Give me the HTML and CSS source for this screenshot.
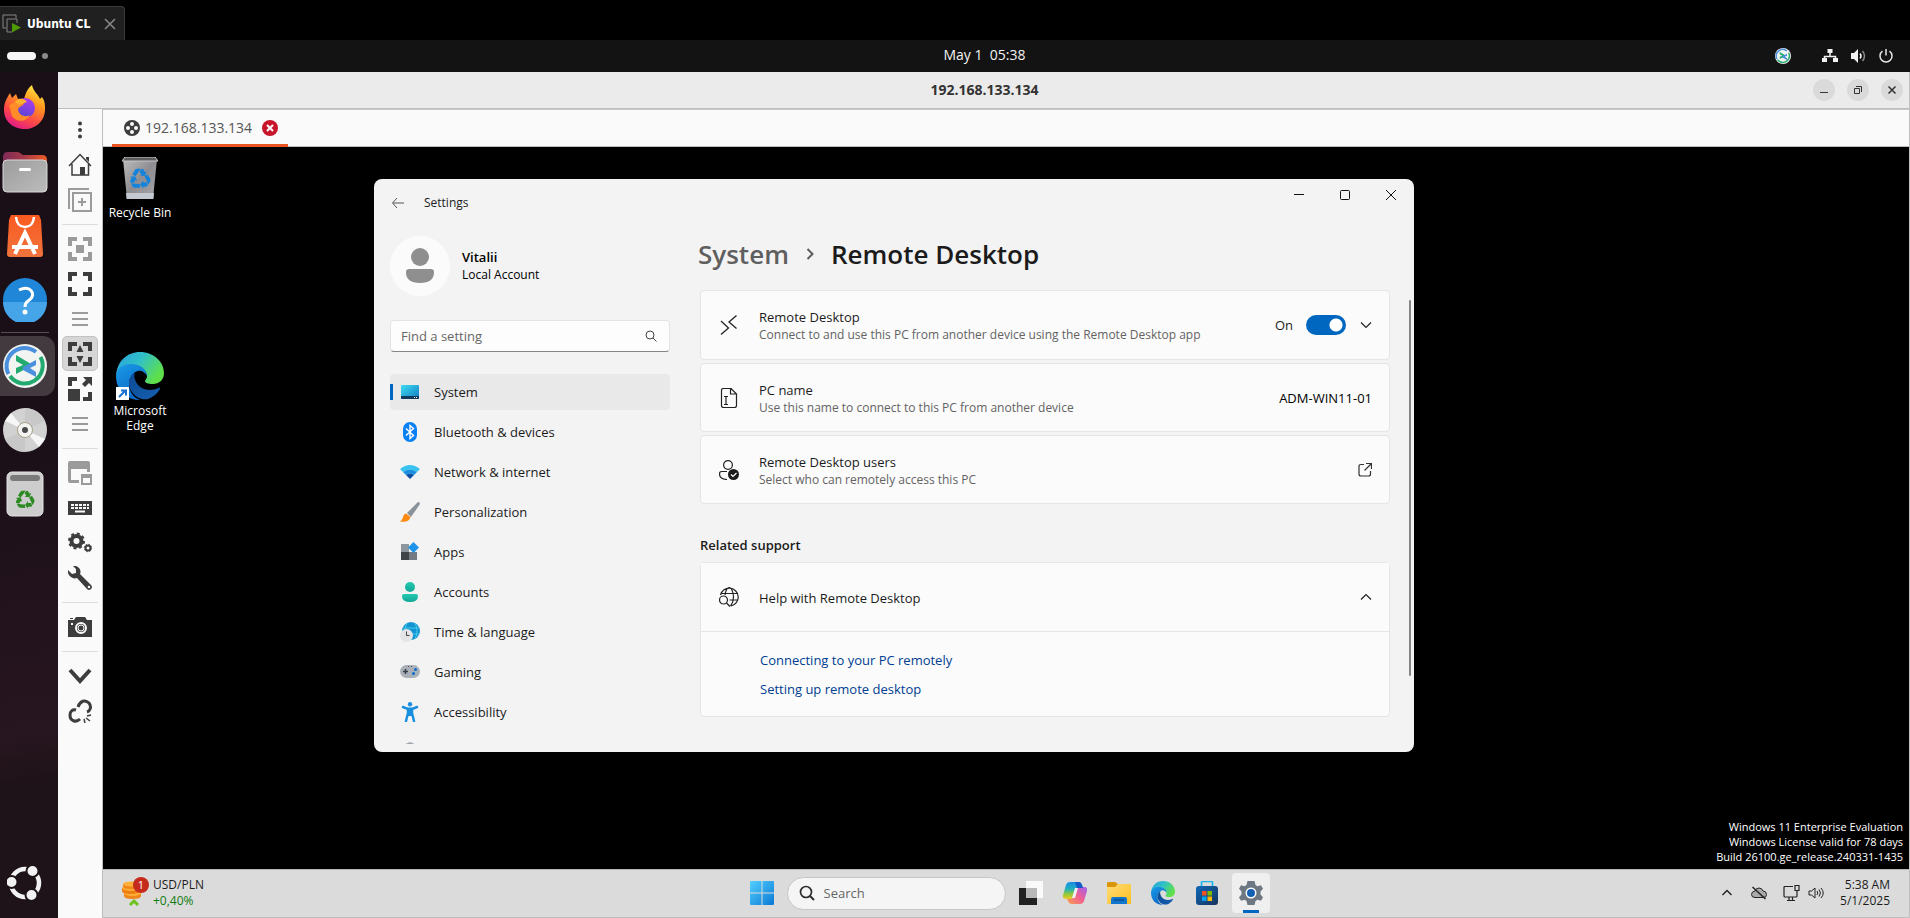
FILE: index.html
```html
<!DOCTYPE html>
<html lang="en">
<head>
<meta charset="utf-8">
<title>Ubuntu CL</title>
<link rel="stylesheet" href="styles.css">
</head>
<body>
<svg class="defs" width="0" height="0" aria-hidden="true">
  <defs>
    <linearGradient id="edgeTop" x1="0" y1="0" x2="1" y2="0.5"><stop offset="0" stop-color="#2a9fe0"/><stop offset="0.5" stop-color="#30c0c8"/><stop offset="1" stop-color="#5fe04a"/></linearGradient>
    <linearGradient id="edgeMid" x1="0" y1="0" x2="0.5" y2="1"><stop offset="0" stop-color="#1a9be8"/><stop offset="1" stop-color="#0a68c4"/></linearGradient>
    <linearGradient id="edgeLow" x1="0" y1="0" x2="1" y2="1"><stop offset="0" stop-color="#0c4a94"/><stop offset="1" stop-color="#155fb0"/></linearGradient>
    <linearGradient id="ffBody" x1="0.8" y1="0" x2="0.3" y2="1"><stop offset="0" stop-color="#fff04a"/><stop offset="0.35" stop-color="#ff9a1f"/><stop offset="0.7" stop-color="#ff4a45"/><stop offset="1" stop-color="#e01a8a"/></linearGradient>
    <linearGradient id="ffGlobe" x1="0.7" y1="0" x2="0.3" y2="1"><stop offset="0" stop-color="#b03af0"/><stop offset="1" stop-color="#5048d0"/></linearGradient>
    <linearGradient id="grey" x1="0" y1="0" x2="1" y2="1"><stop offset="0" stop-color="#9c9c9c"/><stop offset="1" stop-color="#bcbcbc"/></linearGradient>
    <linearGradient id="folderBack" x1="0" y1="0" x2="1" y2="0"><stop offset="0" stop-color="#7e2a58"/><stop offset="0.5" stop-color="#a83a48"/><stop offset="1" stop-color="#f05a24"/></linearGradient>
    <linearGradient id="bag" x1="0" y1="0" x2="0" y2="1"><stop offset="0" stop-color="#fa5a20"/><stop offset="1" stop-color="#f0743c"/></linearGradient>
    <linearGradient id="win" x1="0" y1="0" x2="1" y2="1"><stop offset="0" stop-color="#52d0ff"/><stop offset="1" stop-color="#0a78d4"/></linearGradient>
    <linearGradient id="screen" x1="0" y1="0" x2="1" y2="1"><stop offset="0" stop-color="#3fdcf0"/><stop offset="1" stop-color="#0f7cc4"/></linearGradient>
    <linearGradient id="teal" x1="0" y1="0" x2="0" y2="1"><stop offset="0" stop-color="#26c9b0"/><stop offset="1" stop-color="#12a796"/></linearGradient>
    <linearGradient id="folder" x1="0" y1="0" x2="1" y2="1"><stop offset="0" stop-color="#ffdc78"/><stop offset="1" stop-color="#fdbf20"/></linearGradient>
    <linearGradient id="store" x1="0" y1="0" x2="1" y2="1"><stop offset="0" stop-color="#0f68b8"/><stop offset="1" stop-color="#17335c"/></linearGradient>
    <linearGradient id="copA" x1="0" y1="0" x2="0" y2="1"><stop offset="0" stop-color="#1a8ce8"/><stop offset="0.4" stop-color="#20b0c0"/><stop offset="0.7" stop-color="#8cc83c"/><stop offset="1" stop-color="#f0c820"/></linearGradient>
    <linearGradient id="copB" x1="1" y1="0" x2="0" y2="1"><stop offset="0" stop-color="#a060f0"/><stop offset="0.5" stop-color="#f06090"/><stop offset="1" stop-color="#f8a050"/></linearGradient>
    <linearGradient id="bin" x1="0" y1="0" x2="1" y2="1"><stop offset="0" stop-color="#bdbdbf"/><stop offset="0.5" stop-color="#8e8e92"/><stop offset="1" stop-color="#a8a8ac"/></linearGradient>
    <symbol id="recycle" viewBox="0 0 24 24">
      <g id="arrow"><path d="M7 10.2 3.6 8.2 6.4 3.4Q7.2 2 8.8 2H13L8.2 8.5Z"/><path d="M14 2q1.3 0 2 1.1L17.500 5.700 19.500 4.600 17.300 9.800 11.600 9.300 13.500 8.100 11.500 4.800Z"/></g>
      <use href="#arrow" transform="rotate(120 12 13)"/><use href="#arrow" transform="rotate(240 12 13)"/>
    </symbol>
    <symbol id="edge" viewBox="0 0 48 48">
      <path d="M0 24C1 9 11 0 24 0c14 0 24 10 24 21 0 7-5 11-11 11-5 0-8-1-8-3 0-1 2-2 2-5 0-4-4-9-11-9C10 15 2 19 0 24Z" fill="url(#edgeTop)"/>
      <path d="M0 24C1 16 7 12 15 12c9 0 16 5 16 12-2-4-6-6-9-5-5 1-9 7-9 13 0 8 5 14 11 16C10 48 0 38 0 24Z" fill="url(#edgeMid)"/>
      <path d="M19 20c-7 5-8 14-3 20 4 6 10 8 16 7 5-2 9-5 12-10 0-1 0-2-1-1-9 4-19 2-23-6-2-4-2-7-1-10Z" fill="url(#edgeLow)"/>
    </symbol>
    <symbol id="remmina" viewBox="0 0 44 44">
      <circle cx="22" cy="22" r="22" fill="#f2f4f2"/>
      <path d="M5.500 30A18 18 0 0 1 33 8" fill="none" stroke="#4a90dd" stroke-width="4"/>
      <path d="M37.500 13A18 18 0 0 1 7 32" fill="none" stroke="#22aa70" stroke-width="4"/>
      <path d="M13 11v6l7 4-7 3v6l15-8v-2Z" fill="#22aa70"/><path d="M33 16v5l-6 3 6 4v5l-13-7v-3Z" fill="#4a90dd"/>
    </symbol>
    <symbol id="lines" viewBox="0 0 24 24"><path d="M4 6h16M4 12h16M4 18h16" stroke="#9b9b9b" stroke-width="2"/></symbol>
    <symbol id="corners" viewBox="0 0 24 24"><path d="M2 9V2h7M15 2h7v7M22 15v7h-7M9 22H2v-7" fill="none" stroke="currentColor" stroke-width="4"/></symbol>
  </defs>
</svg>

<header class="host-tabs">
  <div class="host-tab">
    <svg width="20" height="20" viewBox="0 0 20 20"><path d="M4 14H1V1h13v3M15 9V5H5v13h5" fill="none" stroke="#858585"/><path d="m10 9 9 4.500-9 5Z" fill="#4e9a06"/></svg>
    <span class="host-name">Ubuntu CL</span>
    <button class="plain" aria-label="Close tab"><svg width="12" height="12" viewBox="0 0 12 12"><path d="m1 1 10 10M11 1 1 11" stroke="#8a8a8a" stroke-width="1.500"/></svg></button>
  </div>
</header>

<div class="panel">
  <div class="workspaces"><span class="pill"></span><span class="dot"></span></div>
  <time class="clock">May 1&nbsp; 05:38</time>
  <div class="indicators">
    <svg class="ind-remmina" width="16" height="16"><use href="#remmina"/></svg>
    <svg width="16" height="16" viewBox="0 0 16 16"><path d="M8 4v5M2.500 12V8.500h11V12" fill="none" stroke="#f2f2f2" stroke-width="1.500"/><path d="M5.500 1h5v4h-5zM0 10h5v4H0zM11 10h5v4h-5z" fill="#f2f2f2"/></svg>
    <svg width="16" height="16" viewBox="0 0 16 16"><path d="M1 5h3l4-4v14l-4-4H1Z" fill="#f2f2f2"/><path d="M10 5.500q2 2.500 0 5" fill="none" stroke="#f2f2f2" stroke-width="1.500"/><path d="M12.500 3q4 5 0 10" fill="none" stroke="#888" stroke-width="1.500"/></svg>
    <svg width="16" height="16" viewBox="0 0 16 16"><path d="M4.500 3.200a6 6 0 1 0 7 0M8 1v6.500" fill="none" stroke="#e6e6e6" stroke-width="1.500"/></svg>
  </div>
</div>

<div class="session">
  <nav class="dock" aria-label="Dock">
    <button class="dock-item" aria-label="Firefox"><svg width="44" height="46" viewBox="0 0 44 46"><path d="M1 25C1 17 4 13 7 8l2 5 4-4 2 5h6c2-7 4-11 8-14 1 6 6 9 8 14l2-2c3 4 3 8 3 12 0 12-9 20-20 20S1 37 1 25Z" fill="url(#ffBody)"/><circle cx="22" cy="23" r="10" fill="url(#ffGlobe)"/><path d="M6 21c3-4 9-5 15-3-1 4-6 3-6 7 1 5 7 8 12 5-3 7-14 8-18 1-1-3-1-6-3-10Z" fill="#ff8c28"/><path d="M15 14c6-1 7 1 9 3l-8 3-4-3Z" fill="#ffb02e"/></svg></button>
    <button class="dock-item" aria-label="Files"><svg width="46" height="42" viewBox="0 0 46 42"><path d="M1 6q0-5 5-5h9q2 0 3 1l3 2h19q5 0 5 5v11H1Z" fill="url(#folderBack)"/><rect x="1" y="9" width="44" height="32" rx="4" fill="url(#grey)" stroke="#d8d8d8"/><rect x="17" y="17" width="12" height="3" rx="1.500" fill="#fff"/></svg></button>
    <button class="dock-item" aria-label="App Center"><svg width="36" height="44" viewBox="0 0 36 44"><path d="M4 1h28l2 5 2 34q0 3-3 3H3q-3 0-3-3L2 6Z" fill="url(#bag)"/><path d="M9 3q1 10 9 10t9-10" fill="none" stroke="#fff" stroke-width="2.500"/><path d="m8 40 10-21 10 21M5 33h26" fill="none" stroke="#fff" stroke-width="4"/></svg></button>
    <button class="dock-item" aria-label="Help"><svg width="44" height="44" viewBox="0 0 44 44"><circle cx="22" cy="22" r="22" fill="#1f86d8"/><path d="M0 24h44a22 22 0 0 1-44 0Z" fill="#46a4e8"/><path d="M16 12q6-3 10-1 5 3 3 8-1 2-4 4-3 2-3 6" fill="none" stroke="#fff" stroke-width="3"/><circle cx="22" cy="34" r="2.500" fill="#fff"/></svg></button>
    <hr class="dock-line">
    <button class="dock-item running" aria-label="Remmina"><svg width="44" height="44"><use href="#remmina"/></svg></button>
    <button class="dock-item" aria-label="Disc"><svg width="44" height="44" viewBox="0 0 44 44"><circle cx="22" cy="22" r="22" fill="#d2d2d2"/><path d="M22 22 2 13 8 5ZM22 22l20 9-6 8Z" fill="#f6f6f6"/><path d="M22 22 22 0A22 22 0 0 1 42 13ZM22 22v22A22 22 0 0 1 2 31Z" fill="#c8c8c8"/><circle cx="22" cy="22" r="7.500" fill="#f4f4f2" stroke="#a89f88"/><circle cx="22" cy="22" r="3" fill="#4a4a4a"/></svg></button>
    <button class="dock-item" aria-label="Trash"><svg width="38" height="46" viewBox="0 0 38 46"><rect x="1" y="1" width="36" height="44" rx="5" fill="#cdcdcd" stroke="#e4e4e4"/><rect x="4" y="4" width="30" height="6" rx="3" fill="#7a7a7a"/><g fill="#2b8a22"><use href="#recycle" x="9" y="18" width="20" height="20"/></g></svg></button>
    <button class="dock-item dock-end" aria-label="Show apps"><svg width="36" height="36" viewBox="0 0 36 36"><circle cx="18" cy="18" r="14" fill="none" stroke="#f2f2f2" stroke-width="4.500"/><g fill="#f2f2f2" stroke="#1d1218" stroke-width="2"><circle cx="25.500" cy="6" r="6"/><circle cx="4.500" cy="17" r="6"/><circle cx="24.500" cy="30" r="6"/></g></svg></button>
  </nav>

  <main class="remote">
    <div class="titlebar">
      <h1 class="title">192.168.133.134</h1>
      <div class="win-controls">
        <button aria-label="Minimize"><svg width="10" height="10" viewBox="0 0 10 10"><path d="M1 7.500h8" stroke="#333"/></svg></button>
        <button aria-label="Restore"><svg width="10" height="10" viewBox="0 0 10 10"><path d="M1.500 3.500h5v5h-5zM3 1.500h5.500V7" fill="none" stroke="#333"/></svg></button>
        <button aria-label="Close"><svg width="10" height="10" viewBox="0 0 10 10"><path d="m1.500 1.500 7 7M8.500 1.500l-7 7" stroke="#333" stroke-width="1.500"/></svg></button>
      </div>
    </div>
    <div class="remote-body">
      <div class="toolbar" role="toolbar" aria-label="Connection tools">
        <button aria-label="Menu"><svg width="24" height="24" viewBox="0 0 24 24"><g fill="#3d3d3d"><circle cx="12" cy="5.500" r="2"/><circle cx="12" cy="12" r="2"/><circle cx="12" cy="18.500" r="2"/></g></svg></button>
        <button aria-label="Home"><svg width="24" height="24" viewBox="0 0 24 24"><path d="M1 13 12 1.500 23 13M4 11v11h16.500V11" fill="none" stroke="#3d3d3d" stroke-width="1.500"/><path d="M12 14h5v8h-5zM18 4h3v5l-3-3z" fill="#3d3d3d"/></svg></button>
        <button aria-label="Duplicate"><svg width="24" height="24" viewBox="0 0 24 24"><path d="M1 21V1h20M5 5h18v18H5zM14 10v8M10 14h8" fill="none" stroke="#9b9b9b" stroke-width="2"/></svg></button>
        <hr>
        <button class="off" aria-label="Fit window"><svg width="24" height="24" viewBox="0 0 24 24"><use href="#corners"/><path d="M8 8h8v8H8z" fill="currentColor"/></svg></button>
        <button aria-label="Fullscreen"><svg width="24" height="24"><use href="#corners"/></svg></button>
        <button aria-label="Fullscreen options"><svg width="24" height="24"><use href="#lines"/></svg></button>
        <button class="active" aria-label="Dynamic resolution"><svg width="24" height="24" viewBox="0 0 24 24"><use href="#corners"/><path d="m12 3 3.500 7h-7ZM12 21l3.500-7h-7Z" fill="currentColor"/></svg></button>
        <button aria-label="Scaled mode"><svg width="24" height="24" viewBox="0 0 24 24"><path d="M2 9V2h7M22 15v7h-7" fill="none" stroke="currentColor" stroke-width="4"/><path d="M0 12h12v12H0zM15 0h9v9l-3-3-4 4-3-3 4-4Z" fill="currentColor"/></svg></button>
        <button aria-label="Scale options"><svg width="24" height="24"><use href="#lines"/></svg></button>
        <hr>
        <button class="off" aria-label="Multi monitor"><svg width="24" height="24" viewBox="0 0 24 24"><path d="M0 2q0-2 2-2h18q2 0 2 2v9h-3V8H3v11h8v3H2q-2 0-2-2Z" fill="currentColor"/><path d="M13 13h11v11H13Zm2 4v5h7v-5Z" fill="currentColor" fill-rule="evenodd"/></svg></button>
        <button aria-label="Keyboard"><svg width="24" height="24" viewBox="0 0 24 24"><path d="M0 5h24v14H0Z" fill="currentColor"/><path d="M3 9h18M3 12h18" stroke="#fafafa" stroke-width="2" stroke-dasharray="3 1"/><path d="M7 15.500h10" stroke="#fafafa" stroke-width="2"/></svg></button>
        <button aria-label="Preferences"><svg width="24" height="24" viewBox="0 0 24 24" fill="none" stroke="currentColor"><circle cx="8.500" cy="10" r="5" stroke-width="4"/><circle cx="8.500" cy="10" r="7.500" stroke-width="2" stroke-dasharray="3 2.900"/><circle cx="20" cy="17" r="2.500" stroke-width="2"/><circle cx="20" cy="17" r="3.700" stroke-dasharray="1.500 1.400"/></svg></button>
        <button aria-label="Tools"><svg width="24" height="24" viewBox="0 0 24 24"><path d="M5 0c5-1 9 4 7 8l11 11q2 2 0 4t-4 0L9 12C4 14-1 9 0 4l4 4 4-1V3Z" fill="currentColor"/><circle cx="21" cy="21" r="1.300" fill="#fafafa"/></svg></button>
        <hr>
        <button aria-label="Screenshot"><svg width="24" height="24" viewBox="0 0 24 24"><path d="M0 5h6l2-3h9l2 3h5v17H0ZM2 3h3v1H2z" fill="currentColor"/><circle cx="13" cy="13" r="5" fill="none" stroke="#fafafa" stroke-width="2"/><circle cx="13" cy="13" r="3" fill="none" stroke="#fafafa"/><path d="M3 8h2v2H3z" fill="#fafafa"/></svg></button>
        <hr>
        <button aria-label="Minimize window"><svg width="24" height="24" viewBox="0 0 24 24"><path d="m2 6 10 11L22 6" fill="none" stroke="currentColor" stroke-width="4"/></svg></button>
        <button aria-label="Disconnect"><svg width="24" height="24" viewBox="0 0 24 24" fill="none" stroke="currentColor" stroke-width="3"><path d="M10 8c2-6 7-8 11-4 3 4 1 8-2 9M12 20c-4 4-10 2-10-4 0-4 3-6 6-5"/><path d="m19 17 4-1M18 19l4 3M16 20l1 4" stroke-width="1.500"/></svg></button>
      </div>

      <div class="viewer">
        <div class="tabs">
          <div class="tab">
            <svg width="16" height="16" viewBox="0 0 16 16"><circle cx="8" cy="8" r="8" fill="#3d3d3d"/><g fill="#fafafa"><circle cx="8" cy="4" r="2"/><circle cx="4" cy="8" r="2"/><circle cx="12" cy="8" r="2"/><circle cx="8" cy="12" r="2"/></g></svg>
            <span>192.168.133.134</span>
            <button class="plain" aria-label="Close connection"><svg width="16" height="16" viewBox="0 0 16 16"><circle cx="8" cy="8" r="8" fill="#c7162b"/><path d="m5 5 6 6M11 5l-6 6" stroke="#fff" stroke-width="2"/></svg></button>
          </div>
        </div>

        <div class="desktop">
          <button class="shortcut bin"><svg width="36" height="42" viewBox="0 0 36 42"><path d="M1 2h34l-4 40H5Z" fill="url(#bin)"/><path d="M0 4 3 0h30l3 4Z" fill="#5c5e60" stroke="#c8c8c8"/><path d="m4 36 .6 6h26.800l.6-6Z" fill="#c4c8d0"/><g fill="#1483dc"><use href="#recycle" x="7" y="10" width="22" height="22"/></g></svg><span>Recycle Bin</span></button>
          <button class="shortcut edge"><svg width="48" height="48" viewBox="0 0 48 48"><use href="#edge"/><path d="M0 35h13v13H0Z" fill="#fff"/><path d="m3 45 6-6M5 38.500h5v5" fill="none" stroke="#1a6fd0" stroke-width="2"/></svg><span>Microsoft Edge</span></button>

          <section class="settings" aria-label="Settings">
            <aside class="side">
              <div class="caption"><button class="plain" aria-label="Back"><svg width="14" height="12" viewBox="0 0 14 12"><path d="M6 1 1.500 6 6 11M2 6h11" fill="none" stroke="#555"/></svg></button><span>Settings</span></div>
              <div class="user">
                <svg width="60" height="60" viewBox="0 0 60 60"><circle cx="30" cy="30" r="30" fill="#fbfbfb"/><g fill="#8f8f8f"><circle cx="30" cy="21" r="9"/><path d="M19 33h22q3 0 3 3 0 11-14 11T16 36q0-3 3-3Z"/></g></svg>
                <div><strong>Vitalii</strong><small>Local Account</small></div>
              </div>
              <label class="find"><input type="text" placeholder="Find a setting" aria-label="Find a setting"><svg width="12" height="12" viewBox="0 0 12 12"><circle cx="5" cy="5" r="4" fill="none" stroke="#444"/><path d="m8 8 3.500 3.500" stroke="#444"/></svg></label>
              <nav class="menu" aria-label="Settings sections">
                <a href="#" class="on"><svg viewBox="0 0 20 20"><rect x="1" y="3" width="18" height="14" rx="1" fill="url(#screen)"/><path d="M1 14h18v2q0 1-1 1H2q-1 0-1-1Z" fill="#123a5c"/><path d="M14 15.500h1M16 15.500h1" stroke="#fff"/></svg>System</a>
                <a href="#"><svg viewBox="0 0 20 20"><rect x="3" width="14" height="20" rx="7" fill="#0a80f5"/><path d="m6 6.500 7.500 7-3.500 3v-13l3.500 3-7.500 7" fill="none" stroke="#fff" stroke-width="1.400"/></svg>Bluetooth &amp; devices</a>
                <a href="#"><svg viewBox="0 0 20 20"><path d="M0 7Q10-1 20 7l-3 3Q10 5 3 10Z" fill="#38c4ee"/><path d="M3 10q7-5 14 0l-3 3q-4-3-8 0Z" fill="#1b90e0"/><path d="M6 13q4-3 8 0l-4 4Z" fill="#0d4fa4"/></svg>Network &amp; internet</a>
                <a href="#"><svg viewBox="0 0 20 20"><path d="M18 0q2 0 2 2L11 15l-4-4Z" fill="#8a929a"/><path d="M6 11.500 10.500 15C9 20 5 20 0 19.500c4-2 2-7 6-8Z" fill="#fb8a14"/></svg>Personalization</a>
                <a href="#"><svg viewBox="0 0 20 20"><path d="M1 2h8v8H1z" fill="#8d969e"/><path d="M1 10h8v8H1z" fill="#3e4448"/><path d="M9 10h8v8H9z" fill="#747b82"/><path d="m13.500 0 5.500 5.500-5.500 5.500L8 5.500Z" fill="#1d94ea"/></svg>Apps</a>
                <a href="#"><svg viewBox="0 0 20 20" fill="url(#teal)"><circle cx="10" cy="5" r="5"/><path d="M4 12h12q2 0 2 2 0 6-8 6t-8-6q0-2 2-2Z"/></svg>Accounts</a>
                <a href="#"><svg viewBox="0 0 20 20"><circle cx="11" cy="9" r="9" fill="#1494d2"/><path d="M3 6h16M4 12h15M7 1q-4 8 0 16M15 1q4 8 0 16" fill="none" stroke="#45cbe8"/><circle cx="6.500" cy="13.500" r="6.500" fill="#e2e4e6"/><path d="M6.500 9.500v4h3" fill="none" stroke="#444"/></svg>Time &amp; language</a>
                <a href="#"><svg viewBox="0 0 20 20"><rect y="3" width="20" height="13" rx="6.500" fill="#a9b0b8"/><path d="M3 9.500h5M5.500 7v5" stroke="#3a3e44" stroke-width="1.500"/><path d="M8 4.500h1M11 4.500h1" stroke="#555"/><circle cx="15.500" cy="7.500" r="1.500" fill="#0a6cd0"/><circle cx="13.500" cy="11.500" r="1.500" fill="#0a6cd0"/></svg>Gaming</a>
                <a href="#"><svg viewBox="0 0 20 20"><circle cx="10" cy="2.200" r="2.200" fill="#1a8fe0"/><path d="m3 5 5 2v4l-2 8M17 5l-5 2v4l2 8" fill="none" stroke="#1a8fe0" stroke-width="2.500" stroke-linecap="round"/><path d="M7 5.500h6V14H7z" fill="#1a8fe0"/></svg>Accessibility</a>
                <a href="#" aria-label="Privacy &amp; security"><svg viewBox="0 0 20 20"><path d="m10 0 7 3v8q0 5-7 9-7-4-7-9V3Z" fill="#a0a6ae"/></svg></a>
              </nav>
            </aside>

            <div class="page">
              <div class="caption-buttons">
                <button aria-label="Minimize"><svg width="12" height="12" viewBox="0 0 12 12"><path d="M1 5.500h10" stroke="#111"/></svg></button>
                <button aria-label="Maximize"><svg width="12" height="12" viewBox="0 0 12 12"><rect x="1.500" y="1.500" width="9" height="9" rx="1" fill="none" stroke="#111"/></svg></button>
                <button aria-label="Close"><svg width="12" height="12" viewBox="0 0 12 12"><path d="m1 1 10 10M11 1 1 11" stroke="#111"/></svg></button>
              </div>
              <h2 class="crumbs"><span class="parent">System</span><svg width="8" height="12" viewBox="0 0 8 12"><path d="m1.500 1 5 5-5 5" fill="none" stroke="#5c5c5c" stroke-width="2"/></svg><span>Remote Desktop</span></h2>

              <div class="cards">
                <div class="card lead">
                  <svg width="20" height="20" viewBox="0 0 20 20"><path d="m2 6 7.500 7L2 19.500M17.500.500 10 7l7.500 6.500" fill="none" stroke="#222" stroke-width="1.300"/></svg>
                  <div class="what"><b>Remote Desktop</b><small>Connect to and use this PC from another device using the Remote Desktop app</small></div>
                  <label class="toggle">On<input type="checkbox" role="switch" checked></label>
                  <button class="plain" aria-label="Expand"><svg width="12" height="12" viewBox="0 0 12 12"><path d="m1 3.500 5 5 5-5" fill="none" stroke="#222" stroke-width="1.200"/></svg></button>
                </div>
                <div class="card">
                  <svg width="20" height="20" viewBox="0 0 20 20"><path d="M4.500.500H12L17.500 6v11.500q0 2-2 2h-11q-2 0-2-2v-15q0-2 2-2ZM11.500.500V6h6M5 8.500h4M5 16.500h4M7 8.500v8" fill="none" stroke="#222" stroke-width="1.200"/></svg>
                  <div class="what"><b>PC name</b><small>Use this name to connect to this PC from another device</small></div>
                  <span class="value">ADM-WIN11-01</span>
                </div>
                <div class="card">
                  <svg width="20" height="20" viewBox="0 0 20 20"><circle cx="9" cy="5" r="4.400" fill="none" stroke="#222" stroke-width="1.200"/><path d="M8 11.500H2.500q-2 0-2 2.500 0 5 7.500 5.500" fill="none" stroke="#222" stroke-width="1.200"/><circle cx="14.500" cy="14.500" r="5.500" fill="#1b1b1b"/><path d="m12 14.500 2 2 3.500-3.500" fill="none" stroke="#fff" stroke-width="1.200"/></svg>
                  <div class="what"><b>Remote Desktop users</b><small>Select who can remotely access this PC</small></div>
                  <button class="plain" aria-label="Open"><svg width="14" height="14" viewBox="0 0 14 14"><path d="M6 1.500H3q-2 0-2 2V11q0 2 2 2h7.500q2 0 2-2V8M8 .500h5.500V6M13 1 6.500 7.500" fill="none" stroke="#333" stroke-width="1.200"/></svg></button>
                </div>
              </div>

              <h3 class="related">Related support</h3>
              <div class="help">
                <div class="card">
                  <svg width="20" height="20" viewBox="0 0 20 20" fill="none" stroke="#222" stroke-width="1.200"><path d="M1.500 8A9 9 0 1 1 12 19M1.500 6.500h17.500M10.500 13H19M6 8q1-7 4.500-7.500Q14 2 14.500 10q0 5-3 9"/><circle cx="4.500" cy="13" r="4"/><path d="m7.500 16 3.500 3.500"/></svg>
                  <div class="what"><b>Help with Remote Desktop</b></div>
                  <button class="plain" aria-label="Collapse"><svg width="12" height="12" viewBox="0 0 12 12"><path d="m1 8.500 5-5 5 5" fill="none" stroke="#222" stroke-width="1.200"/></svg></button>
                </div>
                <div class="links"><a href="#">Connecting to your PC remotely</a><a href="#">Setting up remote desktop</a></div>
              </div>
              <span class="scrollbar"></span>
            </div>
          </section>

          <p class="watermark">Windows 11 Enterprise Evaluation<br>Windows License valid for 78 days<br>Build 26100.ge_release.240331-1435</p>
        </div>

        <footer class="taskbar">
          <button class="widget">
            <svg width="28" height="32" viewBox="0 0 28 32"><path d="M2 16v3q0 3 8.500 3t8.500-3v-3Z" fill="#f0861a"/><ellipse cx="10.500" cy="16" rx="8.500" ry="3" fill="#ffb038"/><path d="M0 11v3q0 3 8.500 3t8.500-3v-3Z" fill="#ee7e14"/><ellipse cx="8.500" cy="11" rx="8.500" ry="3" fill="#ffaa30"/><path d="M1 7v2q0 3 8.500 3t8.500-3V7Z" fill="#f0861a"/><ellipse cx="9.500" cy="7" rx="8.500" ry="2.500" fill="#ffb038"/><path d="m8 28 4-4 4 4" fill="none" stroke="#6cc21c" stroke-width="3"/><circle cx="19" cy="8" r="8" fill="#c42b1c"/><text x="19" y="12" text-anchor="middle" class="badge">1</text></svg>
            <span>USD/PLN<em>+0,40%</em></span>
          </button>
          <div class="apps">
            <button aria-label="Start"><svg width="24" height="24" viewBox="0 0 24 24" fill="url(#win)"><path d="M0 1q0-1 1-1h10.500v11.500H0ZM12.500 0H23q1 0 1 1v10.500H12.500ZM0 12.500h11.500V24H1q-1 0-1-1ZM12.500 12.500H24V23q0 1-1 1H12.500Z"/></svg></button>
            <label class="search"><svg width="16" height="16" viewBox="0 0 16 16"><circle cx="7" cy="7" r="5.500" fill="none" stroke="#2b2b2b" stroke-width="1.700"/><path d="m11 11 4 4" stroke="#2b2b2b" stroke-width="2"/></svg><input type="text" placeholder="Search" aria-label="Search"></label>
            <button aria-label="Task view"><svg width="24" height="24" viewBox="0 0 24 24"><path d="M0 7h18v17H0Z" fill="#222"/><path d="M7 0h17v17H7Z" fill="#fafafa"/><path d="M7 7h11v10H7Z" fill="#b8b8b8"/></svg></button>
            <button aria-label="Copilot"><svg width="24" height="24" viewBox="0 0 24 24"><path d="M7 1h9q2 0 3 3l1 3h-4q-2 0-3 3l-2 6q-1 2-3 2H3q-4 0-3-4l3-10q1-3 4-3Z" fill="url(#copA)"/><path d="M17 23H8q-2 0-3-3l-1-2h4q2 0 3-3l2-6q1-3 3-3h5q4 0 3 4l-3 10q-1 3-4 3Z" fill="url(#copB)"/><path d="M12 7h3l-3 10H9Z" fill="#f4eef4"/><path d="M12 1h4q2 0 3 3l1 3h-6Z" fill="#1558c8"/></svg></button>
            <button aria-label="File Explorer"><svg width="24" height="24" viewBox="0 0 24 24"><path d="M0 2q0-1 1-1h7l3 2v4H0Z" fill="#d9950c"/><path d="M0 6h8l3-3h12q1 0 1 1v18q0 1-1 1H1q-1 0-1-1Z" fill="url(#folder)"/><path d="M4 23v-5q0-2 2-2h12q2 0 2 2v5Z" fill="#1276cc"/><path d="M7 19h10" stroke="#0a58a0" stroke-width="2"/></svg></button>
            <button aria-label="Edge"><svg width="24" height="24"><use href="#edge"/></svg></button>
            <button aria-label="Microsoft Store"><svg width="24" height="24" viewBox="0 0 24 24"><path d="M6.500 6V1.500q0-1 1-1h9q1 0 1 1V6" fill="none" stroke="#1cb4ea" stroke-width="1.700"/><rect x="1" y="5" width="22" height="19" rx="3" fill="url(#store)"/><path d="M7 10h4.500v4.500H7z" fill="#f25022"/><path d="M12.500 10H17v4.500h-4.500z" fill="#7fba00"/><path d="M7 15.500h4.500V20H7z" fill="#00a4ef"/><path d="M12.500 15.500H17V20h-4.500z" fill="#ffb900"/></svg></button>
            <button class="current" aria-label="Settings"><svg width="24" height="24" viewBox="0 0 24 24"><path d="M8.500 0h7l1 4 2 1.200 3.500-1 2 3.600-2.500 2.700v3L24 16.200l-2 3.600-3.500-1-2 1.200-1 4h-7l-1-4-2-1.200-3.500 1-2-3.600 2.500-2.700v-3L0 7.800l2-3.600 3.500 1L7.500 4Z" fill="#6e7882"/><circle cx="12" cy="12" r="5.500" fill="#fff"/><circle cx="12" cy="12" r="4" fill="#1160b4"/></svg></button>
          </div>
          <div class="tray">
            <button class="plain" aria-label="Hidden icons"><svg width="12" height="12" viewBox="0 0 12 12"><path d="m1.500 8 4.500-4.500L10.500 8" fill="none" stroke="#222" stroke-width="1.400"/></svg></button>
            <button class="plain cloud" aria-label="OneDrive"><svg width="16" height="14" viewBox="0 0 16 14"><path d="M4 11.500q-3.500 0-3.500-3T4 5q1-3 4-3t4 3q3.500 0 3.500 3.500t-3.500 3Z" fill="#aaa" stroke="#222"/><path d="m1.500 1 13 12" stroke="#222" stroke-width="1.500"/></svg></button>
            <button class="plain" aria-label="Network"><svg width="17" height="16" viewBox="0 0 17 16"><path d="M10 1.500H2q-1 0-1 1V11q0 1 1 1h11q1 0 1-1V8M4 15.500h8M6 12v3M9.500 12v3M12 .500h4v5h-4zM14 6v5" fill="none" stroke="#222" stroke-width="1.200"/></svg></button>
            <button class="plain" aria-label="Volume"><svg width="16" height="14" viewBox="0 0 16 14"><path d="M1 5v4h2.500L7 12V2L3.500 5ZM9 5q1.500 2 0 4M11 3.500q3 3.500 0 7M13 2q4.500 5 0 10" fill="none" stroke="#222"/></svg></button>
            <time>5:38 AM<br>5/1/2025</time>
          </div>
        </footer>
      </div>
    </div>
  </main>
</div>
</body>
</html>
```

FILE: styles.css
```css
* { box-sizing: border-box; }

body {
  margin: 0;
  height: 100vh;
  display: flex;
  flex-direction: column;
  overflow: hidden;
  background: #000;
  font-family: "Open Sans", "Noto Sans", sans-serif;
  font-size: 13px;
  line-height: 20px;
  color: #1b1b1b;
}

button, input { font: inherit; color: inherit; }
button { border: 0; padding: 0; background: none; }
svg { display: block; flex: none; }
a { text-decoration: none; color: inherit; }
h1, h2, h3, p, hr { margin: 0; }
hr { border: 0; }
.defs { position: absolute; }
.plain { display: flex; }

/* Host tab strip */
.host-tabs { height: 40px; flex: none; display: flex; align-items: flex-end; }
.host-tab {
  display: flex;
  align-items: center;
  height: 34px;
  padding: 0 8px 0 2px;
  border: 1px solid #3a3a3a;
  border-width: 1px 1px 0 0;
  border-top-right-radius: 4px;
  background: #202020;
}
.host-name {
  margin: 0 14px 0 5px;
  font: bold 12px/20px "DejaVu Sans Condensed", "Noto Sans", sans-serif;
  color: #fff;
}

/* Top panel */
.panel {
  height: 32px;
  flex: none;
  display: grid;
  grid-template-columns: 1fr auto 1fr;
  align-items: center;
  padding: 0 16px 0 7px;
  background: #131313;
  color: #f2f2f2;
}
.workspaces { display: flex; align-items: center; gap: 6px; }
.pill { width: 29px; height: 8px; border-radius: 4px; background: #f6f6f6; }
.dot { width: 6px; height: 6px; border-radius: 3px; background: #8a8a8a; }
.clock { padding: 0 0 2px 68px; font-size: 14px; }
.indicators { display: flex; justify-content: flex-end; gap: 12px; }
.ind-remmina { margin-right: 19px; }

.session { flex: 1; min-height: 0; display: flex; }

/* Dock */
.dock {
  width: 58px;
  flex: none;
  display: flex;
  flex-direction: column;
  padding: 4px 3px 3px 0;
  background: linear-gradient(170deg, #1a0f16 0%, #1a0f17 40%, #27151f 78%, #1e1318 84%, #1e1319 100%);
}
.dock-item {
  height: 64px;
  display: flex;
  align-items: center;
  justify-content: center;
  padding-right: 5px;
}
.dock-line { height: 1px; margin: 0 6px 1px 1px; background: #5a4f56; }
.running { height: 60px; margin: 2px 0; border-radius: 0 12px 12px 0; background: #433a40; }
.dock-end { margin-top: auto; }

/* Remote viewer window */
.remote {
  flex: 1;
  min-width: 0;
  display: flex;
  flex-direction: column;
  border-right: 1px solid #c0c0c0;
  background: #fafafa;
}
.titlebar {
  height: 37px;
  flex: none;
  display: grid;
  grid-template-columns: 1fr auto 1fr;
  align-items: center;
  padding-right: 6px;
  border-bottom: 1px solid #bdbdbd;
  background: #ebebeb;
}
.title { grid-column: 2; padding-left: 8px; font-size: 14px; line-height: 20px; font-weight: 700; color: #333; }
.win-controls { display: flex; justify-content: flex-end; gap: 12px; }
.win-controls button {
  width: 22px;
  height: 22px;
  display: grid;
  place-items: center;
  border-radius: 11px;
  background: #dadada;
}
.remote-body { flex: 1; min-height: 0; display: flex; }
.toolbar {
  width: 45px;
  flex: none;
  display: flex;
  flex-direction: column;
  padding: 3px 4px 0;
  border-right: 1px solid #bdbdbd;
  color: #3d3d3d;
}
.toolbar button {
  height: 35px;
  display: grid;
  place-items: center;
  border-radius: 5px;
}
.toolbar hr { height: 1px; margin: 7px 0 6px; background: #dcdcdc; }
.toolbar .off { color: #9b9b9b; }
.toolbar .active { border: 1px solid #c2c2c2; background: #d6d6d6; }

.viewer { flex: 1; min-width: 0; display: flex; flex-direction: column; }
.tabs {
  height: 38px;
  flex: none;
  display: flex;
  padding: 0 9px;
  border-top: 1px solid #c8c8c8;
  border-bottom: 1px solid #bdbdbd;
}
.tab {
  display: flex;
  align-items: center;
  gap: 5px;
  height: 37px;
  padding: 1px 10px 0 12px;
  border-bottom: 3px solid #e95420;
  font-size: 14px;
  color: #555;
}
.tab button { margin-left: 5px; }

/* Remote desktop */
.desktop { position: relative; flex: 1; min-height: 0; background: #000; }
.shortcut {
  position: absolute;
  left: 0;
  width: 74px;
  display: flex;
  flex-direction: column;
  align-items: center;
  gap: 6px;
  font-size: 12px;
  line-height: 15px;
  color: #fff;
}
.bin { top: 10px; }
.edge { top: 205px; gap: 3px; }
.edge span { width: 60px; }
.watermark {
  position: absolute;
  right: 6px;
  bottom: 5px;
  font-size: 11px;
  line-height: 15px;
  text-align: right;
  color: #fff;
}

/* Settings window */
.settings {
  position: absolute;
  left: 271px;
  top: 32px;
  width: 1040px;
  height: 573px;
  display: flex;
  overflow: hidden;
  border-radius: 8px;
  background: #f3f3f3;
}
.side {
  width: 296px;
  flex: none;
  display: flex;
  flex-direction: column;
  margin-bottom: 8px;
  padding-left: 16px;
  overflow: hidden;
}
.side > * { flex: none; }
.caption {
  display: flex;
  align-items: center;
  gap: 19px;
  height: 48px;
  padding-left: 1px;
  font-size: 12px;
}
.user { display: flex; align-items: center; gap: 12px; margin-top: 9px; color: #000; }
.user strong, .user small { display: block; line-height: 18px; }
.user strong { font-weight: 600; }
.user small { font-size: 12px; }
.find {
  display: flex;
  align-items: center;
  height: 32px;
  margin-top: 24px;
  padding: 0 12px 0 10px;
  border: 1px solid #e4e4e4;
  border-bottom-color: #868686;
  border-radius: 4px;
  background: #fdfdfd;
}
input[type="text"] { flex: 1; min-width: 0; padding: 0; border: 0; outline: 0; background: none; }
input::placeholder { color: #666; opacity: 1; }
.menu { display: flex; flex-direction: column; gap: 4px; margin-top: 22px; }
.menu a {
  display: flex;
  align-items: center;
  gap: 14px;
  height: 36px;
  flex: none;
  padding-left: 10px;
  border-radius: 4px;
}
.menu svg { width: 20px; height: 20px; }
.menu .on {
  padding-left: 7px;
  border-left: 3px solid #0067c0;
  border-image: linear-gradient(transparent 10px, #0067c0 10px, #0067c0 26px, transparent 26px) 0 0 0 3;
  background: #e9e9e9;
}

.page { position: relative; flex: 1; min-width: 0; padding: 0 24px 0 30px; }
.caption-buttons { display: flex; justify-content: flex-end; margin-right: -24px; }
.caption-buttons button { width: 46px; height: 32px; display: grid; place-items: center; }
.crumbs {
  display: flex;
  align-items: center;
  gap: 17px;
  margin: 24px 0 17px -2px;
  font-size: 26px;
  line-height: 38px;
  font-weight: 600;
}
.parent { color: #5f5f5f; }
.cards { display: flex; flex-direction: column; gap: 3px; }
.card {
  display: flex;
  align-items: center;
  height: 69px;
  padding: 0 17px 0 18px;
  border: 1px solid #e5e5e5;
  border-radius: 4px;
  background: #fbfbfb;
}
.lead { height: 70px; }
.what { flex: 1; min-width: 0; margin-left: 20px; padding-top: 2px; }
.what b, .what small { display: block; line-height: 18px; font-weight: 400; }
.what small { font-size: 12px; color: #636363; }
.toggle { display: flex; align-items: center; gap: 13px; margin-right: 14px; }
.toggle input {
  appearance: none;
  width: 40px;
  height: 20px;
  margin: 0;
  border-radius: 10px;
  background: radial-gradient(circle at 30px 10px, #fff 6px, #0067c0 7px);
}
.value { color: #000; }
.related { margin: 31px 0 7px; font-size: 13px; line-height: 20px; font-weight: 600; }
.help { border: 1px solid #e5e5e5; border-radius: 4px; background: #fbfbfb; }
.help .card { border-width: 0 0 1px; border-radius: 0; }
.links {
  display: flex;
  flex-direction: column;
  gap: 9px;
  padding: 18px 59px 17px;
  color: #003e92;
}
.scrollbar {
  position: absolute;
  right: 3px;
  top: 121px;
  width: 2px;
  height: 376px;
  border-radius: 1px;
  background: #858585;
}

/* Taskbar */
.taskbar {
  height: 49px;
  flex: none;
  display: grid;
  grid-template-columns: 1fr auto 1fr;
  align-items: center;
  padding-bottom: 1px;
  border-top: 1px solid #b4b4b4;
  border-bottom: 1px solid #bdbdbd;
  background: #dbdbdb;
}
.widget { display: flex; align-items: center; gap: 3px; padding-left: 19px; text-align: left; font-size: 12px; line-height: 16px; }
.widget em { display: block; font-style: normal; color: #107c10; }
.badge { font-size: 11px; fill: #fff; }
.apps { display: flex; align-items: center; }
.apps button { width: 38px; height: 40px; margin: 0 3px; display: grid; place-items: center; border-radius: 4px; }
.search {
  width: 219px;
  height: 33px;
  display: flex;
  align-items: center;
  gap: 9px;
  margin: 0 3px;
  padding: 0 11px;
  border: 1px solid #c6c6c6;
  border-radius: 17px;
  background: #f5f5f5;
}
.apps .current {
  background: linear-gradient(#0067c0, #0067c0) 50% 100% / 16px 3px no-repeat, #efefef;
}
.tray { display: flex; align-items: center; justify-content: flex-end; gap: 8px; padding-right: 19px; }
.cloud { margin: 0 8px 0 10px; }
.tray time { margin-left: 8px; font-size: 12px; line-height: 16px; text-align: right; }
```
